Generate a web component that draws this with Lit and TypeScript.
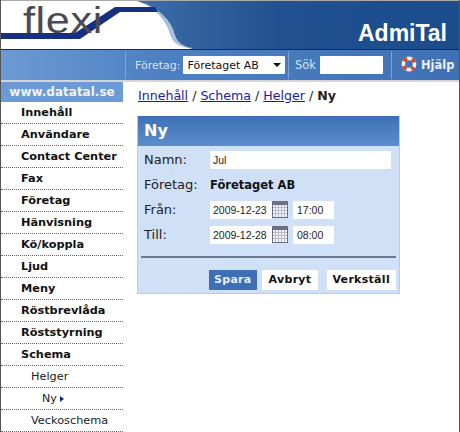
import { LitElement, html, css, svg } from "lit";
import { customElement } from "lit/decorators.js";

const calendar = html`<svg class="cal" viewBox="0 0 16 17" width="16" height="17" aria-hidden="true">
  <rect x="0.5" y="0.5" width="15" height="16" fill="#f4f4f6" stroke="#6c6f80"/>
  <rect x="1" y="1" width="14" height="3" fill="#6c6f85"/>
  ${[3, 6, 9, 12].map((x) => svg`<line x1="${x + 0.5}" y1="4" x2="${x + 0.5}" y2="16" stroke="#b9bcc8"/>`)}
  ${[6, 9, 12].map((y) => svg`<line x1="1" y1="${y + 0.5}" x2="15" y2="${y + 0.5}" stroke="#b9bcc8"/>`)}
</svg>`;

const lifebuoy = html`<svg class="buoy" viewBox="0 0 16 16" width="16" height="16" aria-hidden="true">
  <circle cx="8" cy="8" r="5.6" fill="none" stroke="#f4f4f4" stroke-width="3.6"/>
  <circle cx="8" cy="8" r="5.6" fill="none" stroke="#d8482a" stroke-width="3.6" stroke-dasharray="4.4 4.4" stroke-dashoffset="2.2" transform="rotate(45 8 8)"/>
</svg>`;

const MENU = [
  ["Innehåll", 0], ["Användare", 0], ["Contact Center", 0], ["Fax", 0], ["Företag", 0],
  ["Hänvisning", 0], ["Kö/koppla", 0], ["Ljud", 0], ["Meny", 0], ["Röstbrevlåda", 0],
  ["Röststyrning", 0], ["Schema", 0], ["Helger", 1], ["Ny", 2], ["Veckoschema", 1],
] as [string, number][];

@customElement("app-root")
export class AppRoot extends LitElement {
  static styles = css`
    :host {
      display: block; width: 460px; height: 432px; overflow: hidden; position: relative;
      background: #fff; font-family: "DejaVu Sans", Verdana, sans-serif; color: #111;
    }
    .frame { position: absolute; top: 0; bottom: 0; width: 1px; background: #555; }
    .frame.l { left: 0; } .frame.r { right: 0; }
    .header { position: relative; height: 50px; }
    .header svg.art { display: block; }
    .logo {
      position: absolute; left: 23px; top: 1px; font: 36px/40px "Liberation Sans", sans-serif;
      color: #4a4a52; letter-spacing: 0.5px; white-space: nowrap; transform: scaleX(1.2); transform-origin: left top;
    }
    .brand {
      position: absolute; right: 13px; top: 20px; font: bold 23px/26px "Liberation Sans", sans-serif;
      color: #fff;
    }
    .nav {
      height: 30px; display: flex; align-items: center; font-size: 11px; color: #d5e3f5;
      background: linear-gradient(90deg, #6d9ad4 0%, #4d80c2 35%, #3f70b5 100%);
      box-sizing: border-box; padding-left: 125px;
    }
    .nav .sec { height: 28px; display: flex; align-items: center; gap: 3px; border-left: 1px solid #7ea3d4; }
    .s1 { width: 163px; padding-left: 9px; box-sizing: border-box; }
    .s2 { width: 103px; padding-left: 6px; box-sizing: border-box; gap: 4px !important; font-size: 11.5px; }
    .s3 { padding-left: 9px; gap: 4px !important; color: #e8f0fb; font-weight: bold; font-size: 11.5px; }
    .select {
      width: 102px; height: 18px; background: #fff; color: #111; box-sizing: border-box; padding-left: 4px;
      display: flex; align-items: center; justify-content: space-between; border-radius: 1px; white-space: nowrap;
    }
    .select i { width: 0; height: 0; border: 4px solid transparent; border-top: 4px solid #111; border-bottom: 0; margin-right: 4px; }
    .search { width: 63px; height: 18px; background: #fff; border-radius: 1px; }
    .buoy { display: block; margin-top: -3px; }
    .strip { height: 2px; background: #d4d4d4; }
    .main { display: flex; }
    .side { width: 122px; margin-left: 1px; flex: none; }
    .side h2 {
      margin: 0; height: 20px; background: #6b9ad6; color: #eef4fc; font-size: 12px; line-height: 20px;
      font-weight: bold; text-align: center; white-space: nowrap;
    }
    .side ul { list-style: none; margin: 0; padding: 0; }
    .side li {
      height: 22px; box-sizing: border-box; border-bottom: 1px dotted #4b6a9c; font-size: 11.3px; line-height: 21px;
      font-weight: bold; padding-left: 20px; white-space: nowrap; color: #111;
    }
    .side li.l1 { font-weight: normal; padding-left: 30px; font-size: 11.3px; color: #222; }
    .side li.l2 { font-weight: normal; padding-left: 41px; font-size: 11px; color: #222; }
    .side li i {
      display: inline-block; width: 0; height: 0; margin-left: 3px;
      border: 3.5px solid transparent; border-left: 4px solid #16237a; border-right: 0;
    }
    .content { padding-left: 14px; flex: 1; }
    .crumbs { height: 34px; font-size: 12.6px; line-height: 28px; color: #222; white-space: nowrap; padding-left: 1px; box-sizing: border-box; }
    .crumbs a { color: #1b1baa; text-decoration: underline; }
    .panel { width: 263px; height: 178px; background: #cfe0f7; box-sizing: border-box; border: 1px solid #bccbe0; border-top: 0; }
    .panel h1 {
      margin: 0; height: 30px; font-size: 16px; line-height: 30px; color: #fff; padding-left: 6px;
      background: linear-gradient(180deg, #3f70b6 0%, #5c8dcc 100%);
    }
    .form { padding: 1px 8px 0 6px; display: grid; grid-template-columns: 66px 1fr; grid-auto-rows: 25px; align-items: center; font-size: 13px; color: #222; }
    .input { background: #fff; height: 18px; box-sizing: border-box; font: 10.5px/18px "Liberation Sans", sans-serif; padding-left: 3px; color: #222; border-radius: 1px; white-space: nowrap; }
    .strong { font-weight: bold; color: #111; font-size: 11.5px; }
    .dt { display: flex; align-items: center; }
    .dt .d { width: 62px; } .dt .t { width: 41px; margin-left: 5px; padding-left: 4px; }
    .cal { display: block; }
    hr { margin: 9px 3px 0 3px; border: 0; height: 2px; background: #6b7a90; }
    .btns { display: flex; justify-content: flex-end; gap: 9px; padding: 12px 3px 0 0; }
    .btn {
      height: 20px; box-sizing: border-box; padding: 0 7px; background: #fff; font-size: 11px; font-weight: bold; line-height: 20px; color: #111; letter-spacing: 0.3px;
    }
    .btn.p { background: #3c6fb6; color: #e8f0fb; margin-right: -4px; padding: 0 5px; }
    .btn.v { padding: 0 6px 0 5px; }
  `;

  render() {
    return html`
      <div class="header">
        <svg class="art" width="460" height="50" viewBox="0 0 460 50" aria-hidden="true">
          <defs>
            <linearGradient id="b" x1="0" y1="0" x2="1" y2="0">
              <stop offset="0" stop-color="#3e6ea8"/><stop offset="0.45" stop-color="#20508f"/><stop offset="1" stop-color="#1b4c8c"/>
            </linearGradient>
          </defs>
          <rect width="460" height="50" fill="#fff"/>
          <rect width="460" height="1" fill="#aaa"/>
          <path d="M137 1 H460 V49 H193 C185 47 178 44 175 36 C172 22 160 8 137 1 Z" fill="url(#b)"/>
          <path d="M140 2 C160 8 172 22 175 36 C177 43 184 47 193 48 L190 48 C178 47 172 42 170 34 C166 20 155 8 140 2 Z" fill="#a9bfd9"/>
          <path d="M1 33 H75 L115 7 H155 L158 12 H120 L80 39 H1 Z" fill="#16307f"/>
          <rect y="49" width="460" height="1" fill="#16238a"/>
        </svg>
        <div class="logo">flexi</div>
        <div class="brand">AdmiTal</div>
      </div>
      <div class="nav">
        <div class="sec s1"><span>Företag:</span><div class="select">Företaget AB<i></i></div></div>
        <div class="sec s2"><span>Sök</span><div class="search"></div></div>
        <div class="sec s3">${lifebuoy}<span>Hjälp</span></div>
      </div>
      <div class="strip"></div>
      <div class="main">
        <div class="side">
          <h2>www.datatal.se</h2>
          <ul>
            ${MENU.map(([t, l]) => html`<li class="${l ? "l" + l : ""}">${t}${l === 2 ? html`<i></i>` : ""}</li>`)}
          </ul>
        </div>
        <div class="content">
          <div class="crumbs"><a>Innehåll</a> / <a>Schema</a> / <a>Helger</a> / <b>Ny</b></div>
          <div class="panel">
            <h1>Ny</h1>
            <div class="form">
              <span>Namn:</span><div class="input">Jul</div>
              <span>Företag:</span><span class="strong">Företaget AB</span>
              <span>Från:</span>
              <div class="dt"><div class="input d">2009-12-23</div>${calendar}<div class="input t">17:00</div></div>
              <span>Till:</span>
              <div class="dt"><div class="input d">2009-12-28</div>${calendar}<div class="input t">08:00</div></div>
            </div>
            <hr />
            <div class="btns">
              <div class="btn p">Spara</div><div class="btn">Avbryt</div><div class="btn v">Verkställ</div>
            </div>
          </div>
        </div>
      </div>
      <div class="frame l"></div><div class="frame r"></div>
    `;
  }
}
